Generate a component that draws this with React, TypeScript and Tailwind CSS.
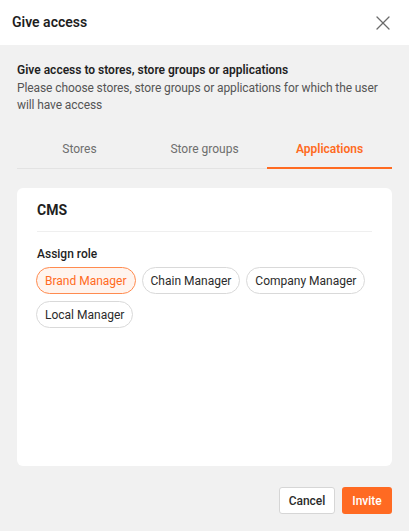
import { X } from "lucide-react";

const roles = ["Brand Manager", "Chain Manager", "Company Manager", "Local Manager"];
const tabs = ["Stores", "Store groups", "Applications"];

export default function App() {
  const active = "Applications";
  const selectedRole = "Brand Manager";

  return (
    <div className="w-[409px] h-[531px] flex flex-col bg-[#f1f1f1] font-['Roboto',sans-serif] text-[#1f1f1f] overflow-hidden">
      {/* Header */}
      <div className="h-[45px] shrink-0 bg-white flex items-center justify-between pl-3 pr-[14px]">
        <div className="text-[14px] font-semibold">Give access</div>
        <X className="w-6 h-6 text-[#6b6b6b]" strokeWidth={1.3} />
      </div>

      <div className="flex-1 flex flex-col px-[17px] pt-[17px] pb-[17px]">
        <div className="text-[12px] font-semibold leading-[17px]">Give access to stores, store groups or applications</div>
        <div className="text-[12px] leading-[17px] text-[#555] mt-[1px] tracking-[-0.1px]">
          Please choose stores, store groups or applications for which the user will have access
        </div>

        {/* Tabs */}
        <div className="grid grid-cols-3 mt-[16px] border-b border-[#e3e3e3]">
          {tabs.map((t) => (
            <div
              key={t}
              className={`h-[39px] flex items-center justify-center text-[12px] -mb-px ${
                t === active
                  ? "text-[#ff6b22] font-semibold border-b-2 border-[#ff6b22]"
                  : "text-[#6e6e6e] border-b-2 border-transparent"
              }`}
            >
              {t}
            </div>
          ))}
        </div>

        {/* Card */}
        <div className="mt-[19px] h-[278px] bg-white rounded-[6px] px-5 pt-[14px]">
          <div className="text-[14px] font-bold leading-[17px]">CMS</div>
          <div className="h-px bg-[#efefef] mt-[12px]" />
          <div className="text-[12px] font-medium mt-[14px] leading-[17px]">Assign role</div>
          <div className="flex flex-wrap gap-x-[6px] gap-y-[7px] mt-[4px] -ml-px">
            {roles.map((r) => (
              <div
                key={r}
                className={`h-[27px] px-[8px] flex items-center rounded-full border text-[12px] ${
                  r === selectedRole
                    ? "border-[#ff8b4f] bg-[#fff4ee] text-[#ff6b22]"
                    : "border-[#d9d9d9] text-[#2b2b2b]"
                }`}
              >
                {r}
              </div>
            ))}
          </div>
        </div>

        {/* Footer */}
        <div className="mt-auto flex justify-end gap-[7px]">
          <button className="h-[27px] w-[56px] bg-white border border-[#d6d6d6] rounded-[3px] text-[12px] font-medium text-[#2b2b2b]">
            Cancel
          </button>
          <button className="h-[27px] w-[50px] bg-[#ff6a22] rounded-[3px] text-[12px] font-medium text-white">
            Invite
          </button>
        </div>
      </div>
    </div>
  );
}
